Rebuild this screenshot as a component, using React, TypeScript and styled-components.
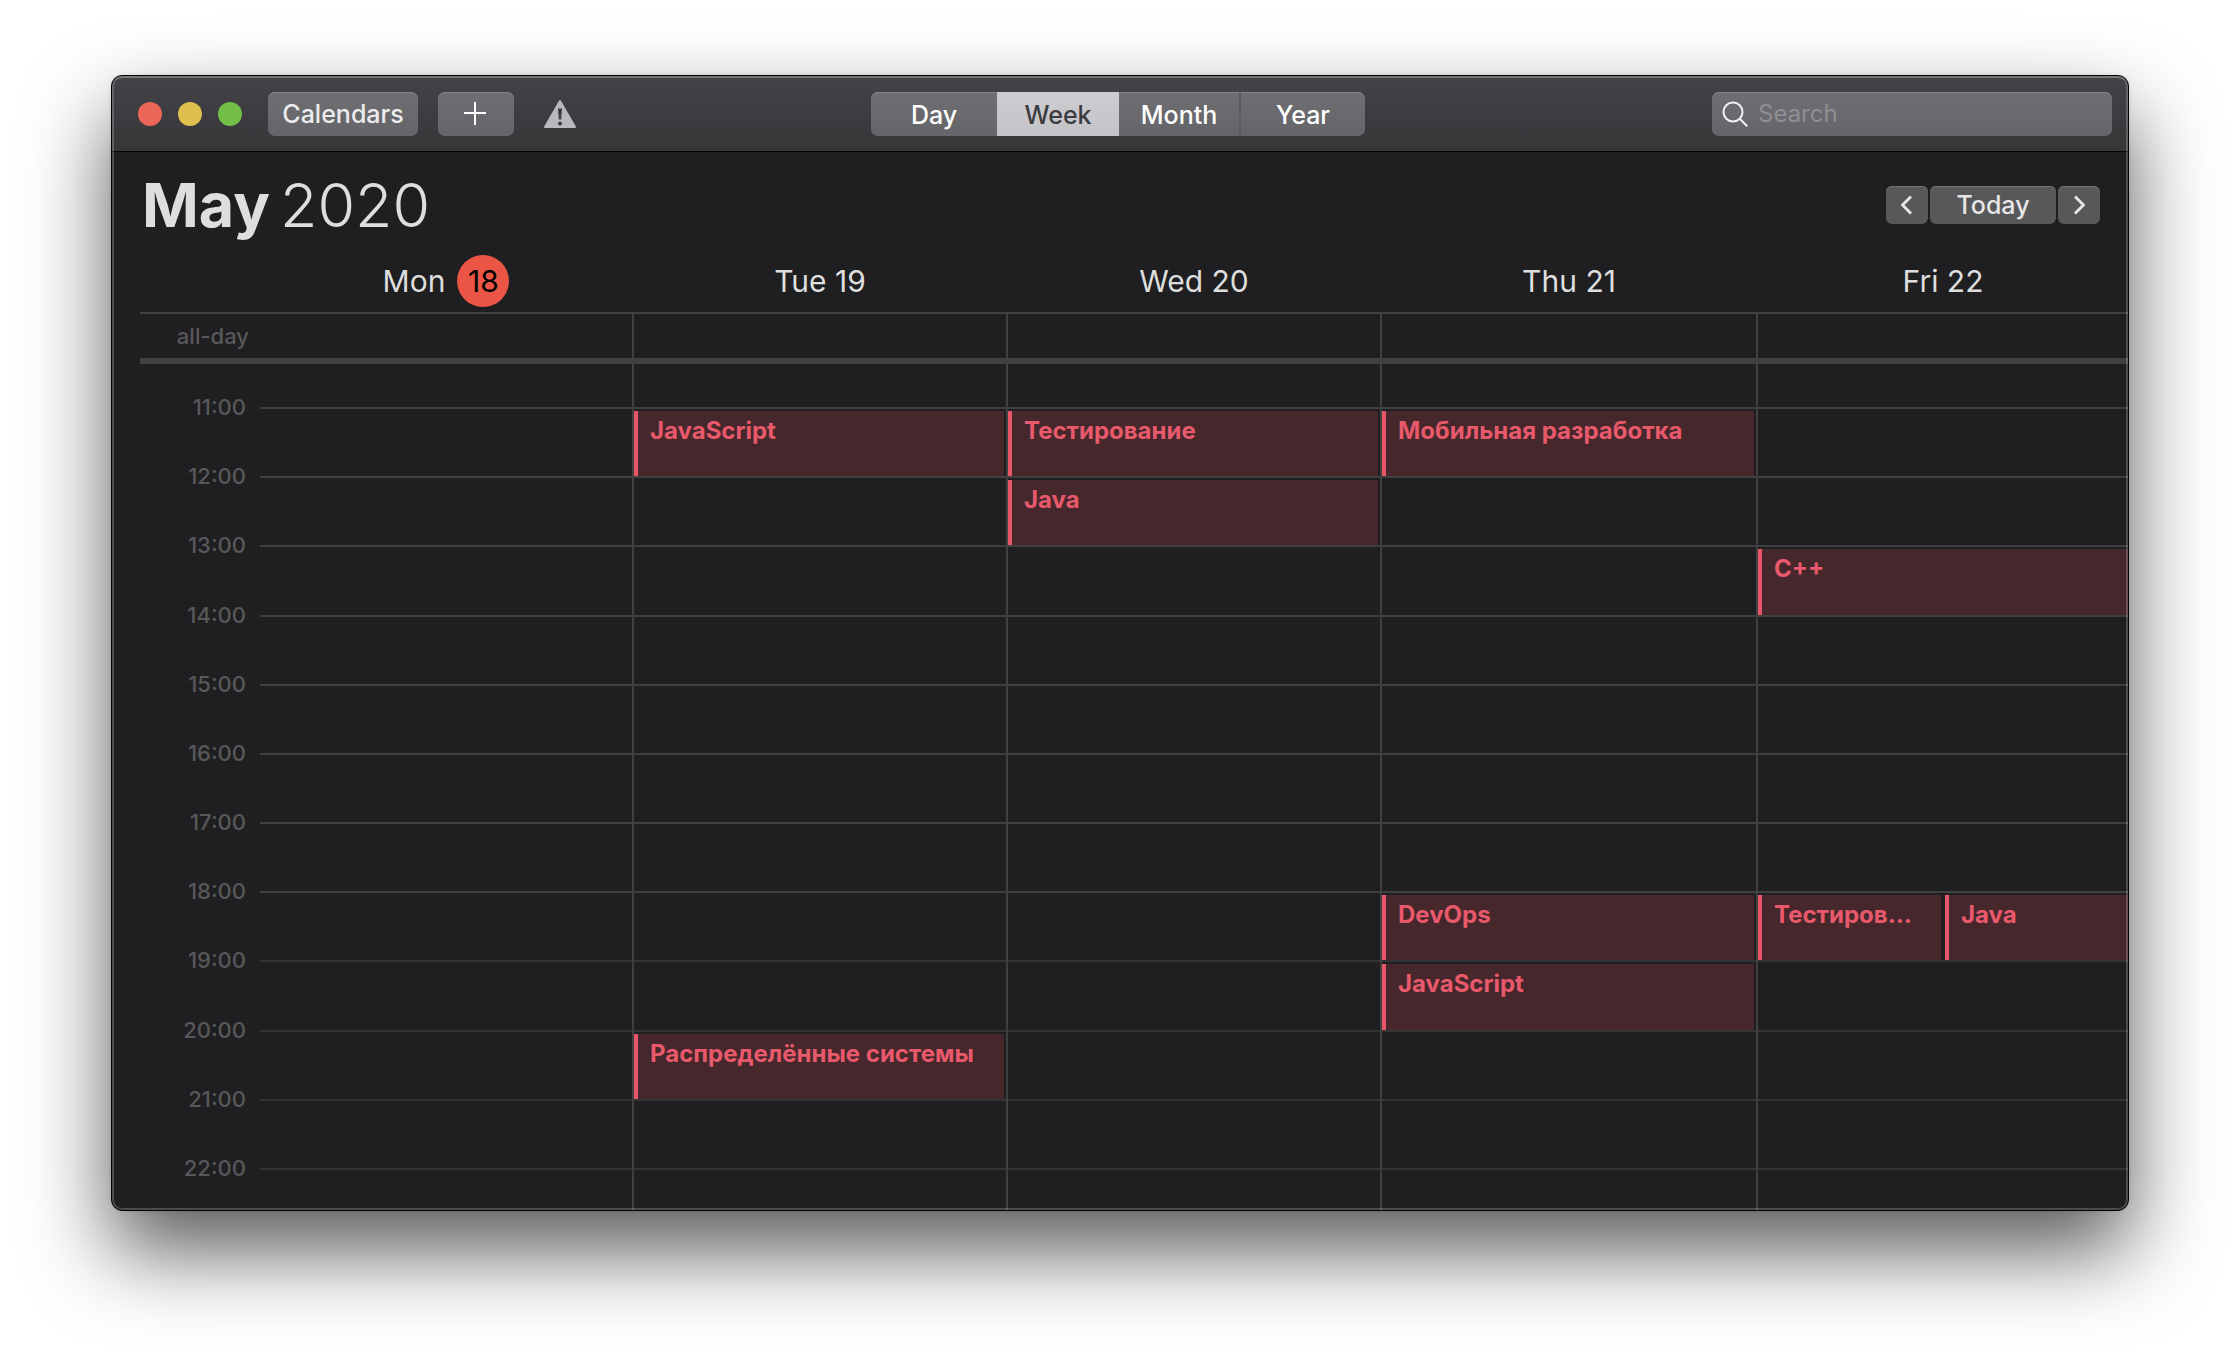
import React, { useState } from "react";
import styled, { createGlobalStyle } from "styled-components";

const GlobalStyle = createGlobalStyle`
  *, *::before, *::after { box-sizing: border-box; }
  body {
    margin: 0;
    background: #fff;
    font-family: Inter, "Liberation Sans", sans-serif;
    -webkit-font-smoothing: antialiased;
  }
  button, input { font: inherit; color: inherit; margin: 0; border: 0; padding: 0; }
`;

const GUTTER = "120px";
const DAY_COLUMNS = "372fr 374fr 374fr 376fr 372fr";
const LINE = "#404041";

const Desktop = styled.div`
  display: flex;
  min-height: 100vh;
  padding: 75px 111px 147px;
`;

const Window = styled.main`
  position: relative;
  display: flex;
  flex: 1;
  flex-direction: column;
  min-width: 0;
  overflow: hidden;
  border: 1px solid #000;
  border-radius: 11px;
  background: #1f1f21;
  color: #dededf;

  &::after {
    content: "";
    position: absolute;
    inset: 0;
    border: 2px solid rgba(255, 255, 255, 0.2);
    border-top-color: rgba(255, 255, 255, 0.28);
    border-radius: 10px;
    pointer-events: none;
  }
`;

const Shadow = styled.div`
  display: flex;
  flex: 1;
  min-width: 0;
  border-radius: 11px;
  box-shadow: 0 40px 84px rgba(0, 0, 0, 0.65), 0 0 4px rgba(0, 0, 0, 0.1);
`;

const Toolbar = styled.header`
  display: grid;
  grid-template-columns: 1fr auto 1fr;
  align-items: center;
  height: 76px;
  padding: 1px 16px 0 12px;
  border-bottom: 1px solid #000;
  background: linear-gradient(#444448, #363639);
  font-size: 25px;
  font-weight: 500;
  line-height: 44px;
`;

const ToolbarLeft = styled.div`
  display: flex;
  align-items: center;
  padding-left: 14px;
`;

const Lights = styled.div`
  display: flex;
  gap: 16px;
  margin-right: 26px;
`;

const Light = styled.button<{ $color: string }>`
  width: 24px;
  height: 24px;
  border-radius: 50%;
  background: ${(p) => p.$color};
`;

const controlSurface = `
  border-radius: 7px;
  background: linear-gradient(#6f6f73, #656569);
  box-shadow: inset 0 1px 0 #858589;
`;

const ToolButton = styled.button<{ $width: number }>`
  display: flex;
  align-items: center;
  justify-content: center;
  width: ${(p) => p.$width}px;
  height: 44px;
  margin-right: 20px;
  ${controlSurface}
  color: #ececee;
`;

const Warning = styled.svg`
  display: block;
  margin-left: 10px;
`;

const Segments = styled.div`
  display: grid;
  grid-template-columns: 126px 122px 120px 126px;
  height: 44px;
  overflow: hidden;
  ${controlSurface}
`;

const Segment = styled.button<{ $active: boolean; $divided: boolean }>`
  padding-top: 1px;
  background: ${(p) => (p.$active ? "linear-gradient(#cdccd1, #c4c3c8)" : "transparent")};
  border-left: ${(p) => (p.$divided ? "2px solid #5c5c60" : "0")};
  color: ${(p) => (p.$active ? "#3c3c40" : "#fff")};
`;

const SearchField = styled.label`
  display: flex;
  align-items: center;
  justify-self: end;
  width: 400px;
  height: 44px;
  padding: 0 10px;
  gap: 10px;
  ${controlSurface}
  color: #f2f2f3;
  font-size: 24px;
  font-weight: 400;

  input {
    flex: 1;
    min-width: 0;
    background: transparent;
    outline: none;
  }
  input::placeholder { color: #8f8f93; opacity: 1; }
`;

const TitleRow = styled.div`
  display: flex;
  align-items: center;
  justify-content: space-between;
  height: 98px;
  padding: 8px 28px 0 30px;
`;

const Title = styled.h1`
  display: flex;
  gap: 10px;
  margin: 0;
  font-size: 61px;
  font-weight: 300;
  line-height: 80px;

  strong { font-weight: 700; }
`;

const Nav = styled.nav`
  display: flex;
  gap: 2px;
`;

const NavButton = styled.button<{ $wide?: boolean }>`
  display: flex;
  align-items: center;
  justify-content: center;
  width: ${(p) => (p.$wide ? 126 : 42)}px;
  height: 38px;
  border-radius: 6px;
  background: #58585a;
  box-shadow: inset 0 1px 0 #747476;
  color: #e6e6e7;
  font-size: 25px;
  font-weight: 500;
  line-height: 38px;
`;

const Week = styled.section`
  display: flex;
  flex: 1;
  flex-direction: column;
  margin-left: 28px;
`;

const DayNames = styled.div`
  display: grid;
  grid-template-columns: ${GUTTER} ${DAY_COLUMNS};
  height: 62px;
  font-size: 30px;
`;

const DayName = styled.div<{ $first: boolean }>`
  display: flex;
  align-items: center;
  justify-content: center;
  gap: 12px;
  ${(p) => (p.$first ? "grid-column: 2;" : "")}
  border-left: ${(p) => (p.$first ? 0 : 2)}px solid transparent;
`;

const TodayBadge = styled.span`
  display: flex;
  align-items: center;
  justify-content: center;
  width: 52px;
  height: 52px;
  border-radius: 50%;
  background: #ea5545;
  color: #000;
`;

const AllDay = styled.div`
  display: grid;
  grid-template-columns: ${GUTTER} ${DAY_COLUMNS};
  height: 52px;
  border-top: 2px solid ${LINE};
  border-bottom: 6px solid ${LINE};
`;

const AllDayLabel = styled.span`
  padding-right: 11px;
  color: #58585a;
  font-size: 22px;
  font-weight: 500;
  line-height: 44px;
  text-align: right;
`;

const Cell = styled.div<{ $first: boolean }>`
  border-left: ${(p) => (p.$first ? 0 : 2)}px solid ${LINE};
`;

const Hours = styled.div`
  display: grid;
  flex: 1;
  grid-template-columns: ${GUTTER} ${DAY_COLUMNS};
  grid-template-rows: 43px repeat(11, minmax(0, 1fr)) 42px;
`;

const HourLabel = styled.span<{ $row: number }>`
  grid-row: ${(p) => p.$row};
  grid-column: 1;
  height: 28px;
  margin-top: -14px;
  padding-right: 14px;
  color: #58585a;
  font-size: 22px;
  font-weight: 500;
  line-height: 28px;
  text-align: right;
`;

const HourLine = styled.div<{ $row: number; $dim: boolean }>`
  grid-row: ${(p) => p.$row};
  grid-column: 2 / -1;
  border-top: 2px solid ${(p) => (p.$dim ? "#343436" : LINE)};
`;

const DayColumn = styled.div<{ $column: number }>`
  grid-row: 1 / -1;
  grid-column: ${(p) => p.$column};
  border-left: 2px solid ${LINE};
`;

const Slot = styled.div<{ $row: number; $column: number; $last: boolean }>`
  display: flex;
  gap: 4px;
  grid-row: ${(p) => p.$row};
  grid-column: ${(p) => p.$column};
  min-width: 0;
  margin: 4px ${(p) => (p.$last ? 0 : 2)}px 0 2px;
`;

const Event = styled.div`
  flex: 1;
  min-width: 0;
  padding: 4px 20px 0 12px;
  overflow: hidden;
  border-left: 4px solid #e8566a;
  background: #46272c;
  color: #e8596b;
  font-size: 24px;
  font-weight: 700;
  line-height: 32px;
  text-overflow: ellipsis;
  white-space: nowrap;
`;

const FIRST_HOUR = 11;
const hours = Array.from({ length: 12 }, (_, i) => FIRST_HOUR + i);
const rowOf = (hour: number) => hour - FIRST_HOUR + 2;

const days = [
  { name: "Mon", date: 18, today: true },
  { name: "Tue", date: 19 },
  { name: "Wed", date: 20 },
  { name: "Thu", date: 21 },
  { name: "Fri", date: 22 },
];

const slots = [
  { day: 1, hour: 11, events: ["JavaScript"] },
  { day: 1, hour: 20, events: ["Распределённые системы"] },
  { day: 2, hour: 11, events: ["Тестирование"] },
  { day: 2, hour: 12, events: ["Java"] },
  { day: 3, hour: 11, events: ["Мобильная разработка"] },
  { day: 3, hour: 18, events: ["DevOps"] },
  { day: 3, hour: 19, events: ["JavaScript"] },
  { day: 4, hour: 13, events: ["C++"] },
  { day: 4, hour: 18, events: ["Тестирование", "Java"] },
];

const views = ["Day", "Week", "Month", "Year"];

const Chevron = ({ d }: { d: string }) => (
  <svg width="12" height="20" viewBox="0 0 12 20" fill="none" stroke="currentColor" strokeWidth="2.8" aria-hidden="true">
    <path d={d} />
  </svg>
);

export default function App() {
  const [view, setView] = useState("Week");
  const [query, setQuery] = useState("");

  return (
    <>
      <GlobalStyle />
      <Desktop>
        <Shadow>
          <Window>
            <Toolbar>
              <ToolbarLeft>
                <Lights>
                  <Light $color="#ec6559" aria-label="Close" />
                  <Light $color="#e0c04c" aria-label="Minimize" />
                  <Light $color="#72be47" aria-label="Zoom" />
                </Lights>
                <ToolButton $width={150}>Calendars</ToolButton>
                <ToolButton $width={76} aria-label="New event">
                  <svg width="24" height="24" viewBox="0 0 24 24" stroke="#fff" strokeWidth="2" aria-hidden="true">
                    <path d="M11 0v23M0 11h22" />
                  </svg>
                </ToolButton>
                <Warning width="32" height="28" viewBox="0 0 32 28" role="img" aria-label="Warning">
                  <path d="M16 1 31 27H1Z" fill="#b9b9bd" stroke="#b9b9bd" strokeWidth="2" strokeLinejoin="round" />
                  <path d="M14 8.500h4l-.8 11h-2.400Z" fill="#3d3d40" />
                  <circle cx="16" cy="23.500" r="2" fill="#3d3d40" />
                </Warning>
              </ToolbarLeft>
              <Segments role="group" aria-label="View">
                {views.map((v) => (
                  <Segment
                    key={v}
                    $active={v === view}
                    $divided={v === "Year"}
                    aria-pressed={v === view}
                    onClick={() => setView(v)}
                  >
                    {v}
                  </Segment>
                ))}
              </Segments>
              <SearchField>
                <svg width="26" height="26" viewBox="0 0 26 26" fill="none" stroke="currentColor" strokeWidth="2" aria-hidden="true">
                  <circle cx="11" cy="11" r="9.500" />
                  <path d="m17.800 17.800 7.400 7.400" />
                </svg>
                <input
                  type="text"
                  aria-label="Search"
                  placeholder="Search"
                  value={query}
                  onChange={(e) => setQuery(e.target.value)}
                />
              </SearchField>
            </Toolbar>

            <TitleRow>
              <Title>
                <strong>May</strong> <span>2020</span>
              </Title>
              <Nav aria-label="Week navigation">
                <NavButton aria-label="Previous week">
                  <Chevron d="M10 1.500 1.500 10l8.500 8.500" />
                </NavButton>
                <NavButton $wide>Today</NavButton>
                <NavButton aria-label="Next week">
                  <Chevron d="M2 1.500 10.500 10 2 18.500" />
                </NavButton>
              </Nav>
            </TitleRow>

            <Week>
              <DayNames>
                {days.map((d, i) => (
                  <DayName key={d.name} $first={i === 0}>
                    {d.today ? (
                      <>
                        {d.name}
                        <TodayBadge>{d.date}</TodayBadge>
                      </>
                    ) : (
                      `${d.name} ${d.date}`
                    )}
                  </DayName>
                ))}
              </DayNames>
              <AllDay>
                <AllDayLabel>all-day</AllDayLabel>
                {days.map((d, i) => (
                  <Cell key={d.name} $first={i === 0} />
                ))}
              </AllDay>
              <Hours>
                {hours.map((h) => (
                  <React.Fragment key={h}>
                    <HourLabel $row={rowOf(h)}>{h}:00</HourLabel>
                    <HourLine $row={rowOf(h)} $dim={h > 18} />
                  </React.Fragment>
                ))}
                {days.slice(1).map((d, i) => (
                  <DayColumn key={d.name} $column={i + 3} />
                ))}
                {slots.map((s) => (
                  <Slot
                    key={`${s.day}-${s.hour}`}
                    $row={rowOf(s.hour)}
                    $column={s.day + 2}
                    $last={s.day === days.length - 1}
                  >
                    {s.events.map((name) => (
                      <Event key={name}>{name}</Event>
                    ))}
                  </Slot>
                ))}
              </Hours>
            </Week>
          </Window>
        </Shadow>
      </Desktop>
    </>
  );
}
